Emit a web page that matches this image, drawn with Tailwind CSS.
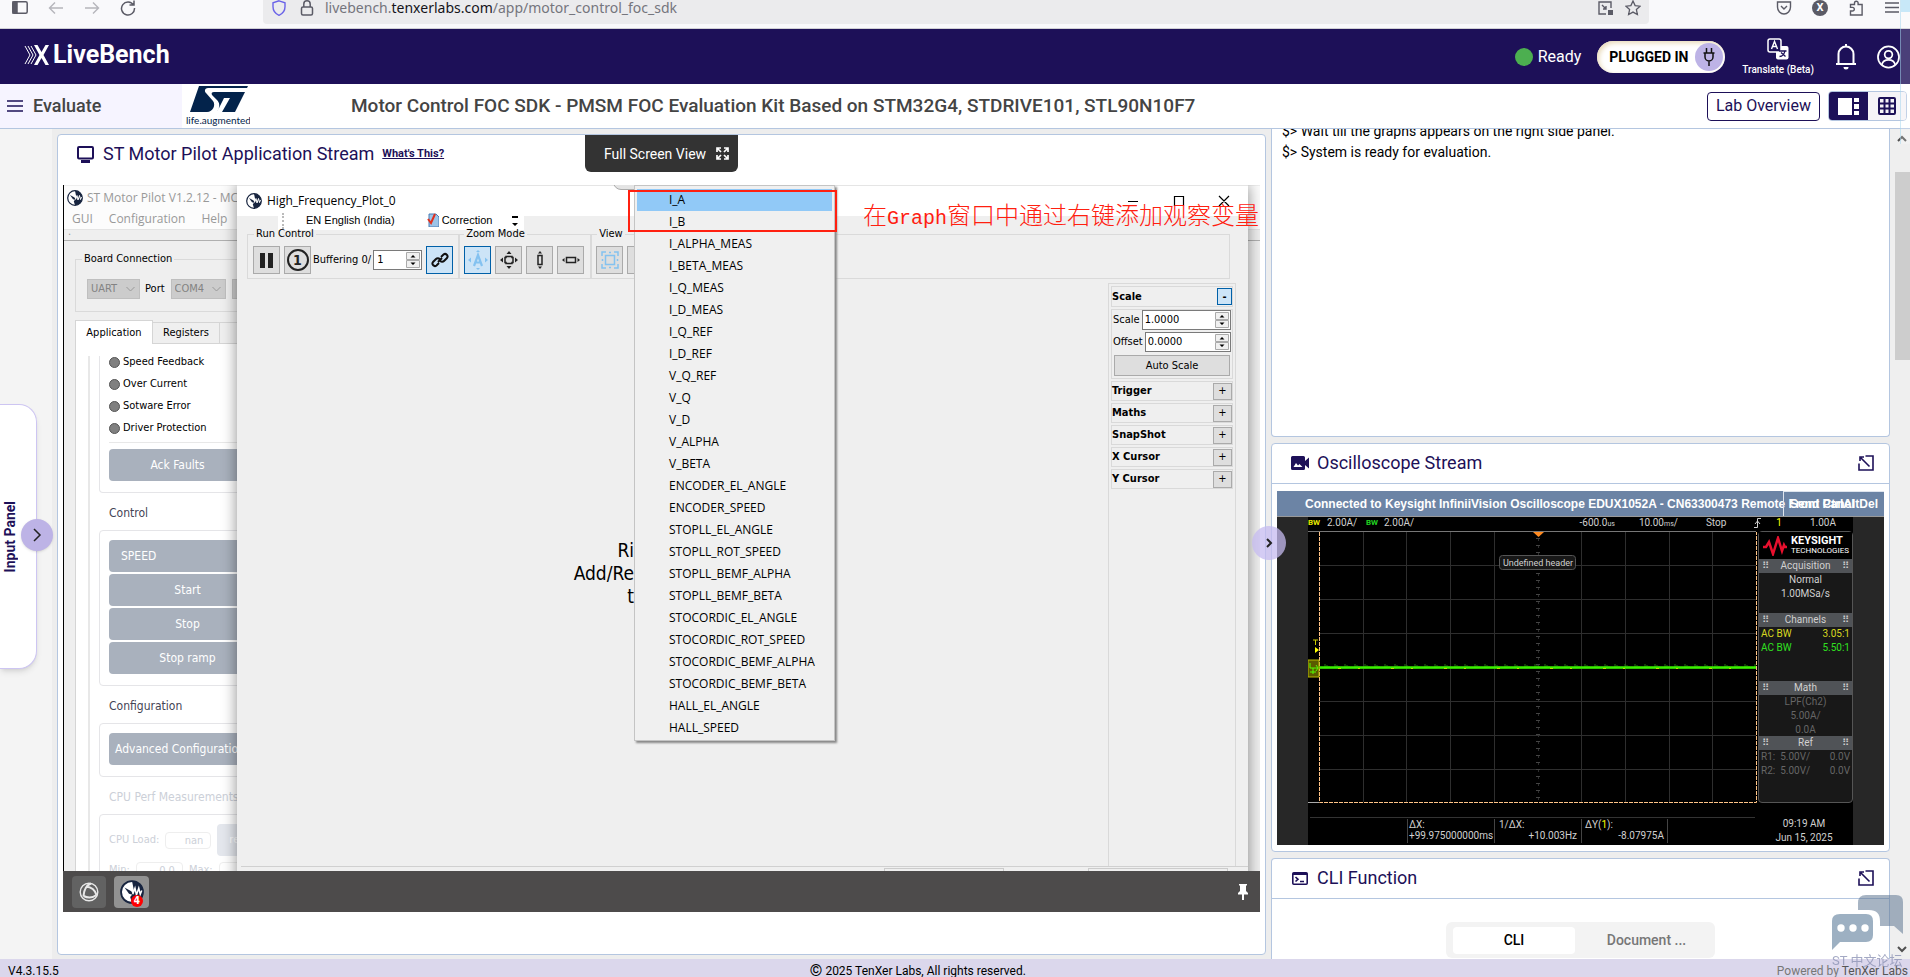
<!DOCTYPE html>
<html lang="en">
<head>
    <meta charset="UTF-8">
    <meta name="viewport" content="width=device-width, initial-scale=1.0">
    <title>LiveBench - Motor Control FOC SDK</title>
    <script src="https://cdn.jsdelivr.net/npm/@tailwindcss/browser@4"></script>
</head>
<body class="h-screen overflow-hidden flex flex-col bg-[#ededed] font-[Roboto,sans-serif] text-black">

    <!-- shared icons -->
    <svg class="hidden">
        <symbol id="pilot" viewBox="0 0 16 16">
            <circle cx="8" cy="8" r="7.3" fill="#fff" stroke="#17243f" stroke-width="1.2"/>
            <path d="M8 .7a7.3 7.3 0 0 1 0 14.6l-1.2-4L9.500 8z" fill="#17243f"/>
            <path d="M3 5l4.500 2.500 1.500 2.500-3-.8z" fill="#17243f"/>
            <path d="M8.500 9.500l1.500-4 1 4.500 1.500-4.500 1 4 1-2.500" fill="none" stroke="#fff" stroke-width="1"/>
        </symbol>
        <symbol id="expand" viewBox="0 0 16 16">
            <path d="M7.500 1H15v14H1V8.500M3 3l8.500 8.500M2 6V2h4" fill="none" stroke="#1d1058" stroke-width="1.600"/>
        </symbol>
        <symbol id="spin" viewBox="0 0 14 16">
            <path d="M.5.500h13v7H.500zM.5 8.500h13v7H.500z" fill="#f0f0f0" stroke="#aaa"/>
            <path d="M4.500 5.500h5L7 3zM4.500 10.500h5L7 13z"/>
        </symbol>
    </svg>

    <!-- browser toolbar -->
    <div class="h-[29px] shrink-0 flex items-start bg-[#f9f9fb] border-b border-[#cfcfd4] text-[#5b5b66]">
        <div class="w-[263px] flex items-center gap-5 pl-3">
            <svg class="w-4 h-4" viewBox="0 0 16 16" fill="none" stroke="currentColor" stroke-width="1.500"><rect x=".8" y="1.800" width="14.400" height="11.500" rx="1.500"/><path d="M1 2h4v11H1z" fill="currentColor"/></svg>
            <svg class="w-4 h-4 text-[#b5b5bb]" viewBox="0 0 16 16" fill="none" stroke="currentColor" stroke-width="1.400"><path d="M15 8H1.500M7 2.500L1.500 8 7 13.500"/></svg>
            <svg class="w-4 h-4 text-[#b5b5bb]" viewBox="0 0 16 16" fill="none" stroke="currentColor" stroke-width="1.400"><path d="M1 8h13.500M9 2.500L14.500 8 9 13.500"/></svg>
            <svg class="w-4 h-4" viewBox="0 0 16 16" fill="none" stroke="currentColor" stroke-width="1.500"><path d="M13.500 5A6.500 6.500 0 1 0 14.500 8M14 .5V5H9.500"/></svg>
        </div>
        <div class="flex-1 h-6 flex items-start bg-[#ebebed] rounded-b-sm pl-2 pr-2">
            <svg class="w-4 h-4" viewBox="0 0 16 16" fill="none" stroke="#6a63e8" stroke-width="1.400"><path d="M8 .8l6 2v4c0 4-2.500 7-6 8.500C4.500 13.800 2 10.800 2 6.800v-4z"/></svg>
            <svg class="w-4 h-4 ml-3" viewBox="0 0 16 16" fill="none" stroke="currentColor" stroke-width="1.500"><rect x="2.500" y="7" width="11" height="8" rx="1.500"/><path d="M4.800 7V4a3.200 3.200 0 0 1 6.400 0v3"/></svg>
            <span class="ml-[10px] text-[14px] leading-4 text-[#75757d] font-['Noto_Sans',sans-serif]">livebench.<span class="text-[#15141a]">tenxerlabs.com</span>/app/motor_control_foc_sdk</span>
            <svg class="w-4 h-4 ml-auto" viewBox="0 0 16 16" fill="none" stroke="currentColor" stroke-width="1.400"><path d="M9 14H2V2h12v6M5 5l4 4M9 6v3H6"/><path d="M11 10h5v5h-5z" fill="currentColor" stroke="none"/></svg>
            <svg class="w-4 h-4 ml-3" viewBox="0 0 16 16" fill="none" stroke="currentColor" stroke-width="1.300"><path d="M8 1l2.100 4.600 5 .6-3.700 3.400 1 5L8 12.100l-4.400 2.500 1-5L.9 6.200l5-.6z"/></svg>
        </div>
        <div class="w-[261px] flex items-center justify-end gap-5 pr-[10px]">
            <svg class="w-4 h-4" viewBox="0 0 16 16" fill="none" stroke="currentColor" stroke-width="1.400"><path d="M1.500 2h13v5c0 4-3 7-6.500 7s-6.500-3-6.500-7zM5 6l3 3 3-3"/></svg>
            <span class="w-4 h-4 rounded-full bg-[#5b5b66] text-white text-[11px] leading-4 font-bold text-center">X</span>
            <svg class="w-4 h-4" viewBox="0 0 16 16" fill="none" stroke="currentColor" stroke-width="1.400"><path d="M2.500 15V11h2a1.800 1.800 0 0 0 0-3.600h-2V4.500h4V3a1.800 1.800 0 0 1 3.600 0v1.500h4V15z"/></svg>
            <svg class="w-4 h-4" viewBox="0 0 16 16" stroke="currentColor" stroke-width="1.400"><path d="M1 3h14M1 7.500h14M1 12h14"/></svg>
        </div>
    </div>

    <!-- app header -->
    <header class="h-[55px] shrink-0 flex items-center bg-[#1d1058] text-white pl-6 pr-[10px]">
        <a href="#" class="flex items-center gap-1 pb-1 text-[25px] leading-6 font-bold">
            <svg class="w-[25px] h-5" viewBox="0 0 25 20" fill="none" stroke="#fff"><path d="M1 1l5 9-5 9M4 1l5 9-5 9M7 1l5 9-5 9" stroke-width="1"/><path d="M10 0h3.500l4 7 4-7H25l-5.500 10L25 20h-3.500l-4-7-4 7H10l5.500-10z" fill="#fff" stroke="none"/></svg>
            LiveBench
        </a>
        <span class="ml-auto w-[18px] h-[18px] rounded-full bg-[#4caf50]"></span>
        <span class="ml-[5px] text-base">Ready</span>
        <button class="ml-4 w-32 h-8 rounded-full bg-white shadow-[inset_2px_2px_5px_#e8d9b8] flex items-center justify-between pl-3 pr-[2px] text-sm font-bold text-black">
            PLUGGED IN
            <span class="w-7 h-7 rounded-full bg-[#bdb3e6] flex items-center justify-center">
                <svg class="w-4 h-5" viewBox="0 0 16 20" fill="none" stroke="#111" stroke-width="1.500"><path d="M5.500 1v5M10.500 1v5M2.500 6h11M4 6v4a4 4 0 0 0 8 0V6M8 14v5"/></svg>
            </span>
        </button>
        <button class="ml-[17px] flex flex-col items-center text-[10px] leading-3 font-medium">
            <svg class="w-[22px] h-[22px] mb-1" viewBox="0 0 22 22"><rect x="9" y="8" width="12.500" height="13.500" rx="2" fill="#fff"/><rect x="1" y="1" width="13" height="13" rx="2" fill="#1d1058" stroke="#fff" stroke-width="1.500"/><path d="M4.500 11l3-7.500 3 7.500M5.500 8.500h4" stroke="#fff" stroke-width="1.400" fill="none"/><path d="M12.500 18.500c3 0 5-3 5.500-6M12 13h7.500M14 14.500l4.500 4" stroke="#1d1058" stroke-width="1.300" fill="none"/></svg>
            Translate (Beta)
        </button>
        <svg class="ml-[21px] w-[22px] h-[26px]" viewBox="0 0 22 26" fill="none" stroke="#fff" stroke-width="2"><path d="M1 20h20M3.500 20V10a7.500 7.500 0 0 1 15 0v10M11 3V0"/><path d="M8.500 23h5a2.500 2.500 0 0 1-5 0z" fill="#fff" stroke="none"/></svg>
        <svg class="ml-5 w-[23px] h-6" viewBox="0 0 24 24" fill="none" stroke="#fff" stroke-width="1.800"><circle cx="12" cy="12" r="11"/><circle cx="12" cy="9.500" r="4"/><path d="M5 20c1-3.500 4-5 7-5s6 1.500 7 5"/></svg>
    </header>

    <!-- title bar -->
    <div class="h-[45px] shrink-0 flex items-center bg-white border-b border-[#b4c6e0] text-[#444] pr-[3px]">
        <div class="w-[182px] h-full bg-[#f6f4ff] flex items-center gap-[10px] pl-[7px] text-lg font-medium">
            <svg class="w-4 h-4" viewBox="0 0 16 16" stroke="#1d1058" stroke-width="1.600"><path d="M0 3h16M0 8h16M0 13h16"/></svg>
            Evaluate
        </div>
        <svg class="ml-1 w-[64px] h-[42px]" viewBox="0 0 64 42"><path d="M13 1h49l-1 2H22c-3 0-4 3-2 5l7 8c3 4 0 11-6 11H4zM28 7h31l-10 20H36l8-14h-6l-7 14c3-5 3-9 0-12l-5-5c-1-2 0-3 2-3z" fill="#03234b"/><text x="0" y="39" font-size="10" fill="#03234b" font-family="Lato">life.augmented</text></svg>
        <h1 class="ml-[101px] text-[19px] leading-6 font-medium">Motor Control FOC SDK - PMSM FOC Evaluation Kit Based on STM32G4, STDRIVE101, STL90N10F7</h1>
        <button class="ml-auto h-[29px] px-2 border border-[#1d1058] rounded text-base leading-6 text-[#1d1058]">Lab Overview</button>
        <div class="ml-2 h-[30px] flex border border-[#b4c6e0] rounded overflow-hidden">
            <button class="w-[39px] bg-[#1d1058] flex items-center justify-center" aria-label="Split view"><svg class="w-[22px] h-[17px]" viewBox="0 0 22 17" fill="#fff"><path d="M0 0h14v17H0zM16 0h5v4h-5zM16 6h5v5h-5zM16 13h5v4h-5z"/></svg></button>
            <button class="w-[38px] bg-[#f5f3f7] flex items-center justify-center" aria-label="Grid view"><svg class="w-[18px] h-[18px]" viewBox="0 0 18 18" fill="none" stroke="#1d1058" stroke-width="2"><rect x="1" y="1" width="16" height="16" rx="1"/><path d="M6.500 1v16M11.500 1v16M1 6.500h16M1 11.500h16"/></svg></button>
        </div>
    </div>

    <main class="flex-1 min-h-0 flex">
        <!-- collapsed input panel -->
        <aside class="w-[52px] shrink-0 bg-[#f4f4f4] pt-[275px] relative z-20">
            <div class="w-[37px] h-[265px] relative bg-white border border-l-0 border-[#cdc5f2] rounded-r-[18px] shadow-md flex items-center">
                <span class="[writing-mode:vertical-rl] rotate-180 text-sm leading-5 font-bold text-[#1d1058]">Input Panel</span>
                <button class="absolute top-[114px] left-[21px] w-8 h-8 rounded-full bg-[#bdb3e6] shadow flex items-center justify-center" aria-label="Open input panel"><svg class="w-3 h-4" viewBox="0 0 12 16" fill="none" stroke="#222" stroke-width="1.500"><path d="M3 2l6 6-6 6"/></svg></button>
            </div>
        </aside>

        <!-- application stream -->
        <section class="flex-1 min-w-0 ml-[5px] mt-[5px] mb-1 relative bg-white border border-[#b4c6e0] rounded flex flex-col px-[5px]">
            <div class="h-[50px] shrink-0 flex items-start pl-[14px] pt-2">
                <svg class="mt-[3px] w-[17px] h-[17px]" viewBox="0 0 17 17" fill="none" stroke="#1d1058" stroke-width="2"><rect x="1" y="1" width="15" height="11.500" rx="1"/><path d="M4 15.500h9" stroke-width="3"/></svg>
                <h2 class="ml-[9px] text-lg leading-[22px] text-[#1d1058]">ST Motor Pilot Application Stream</h2>
                <a href="#" class="ml-2 text-[11px] leading-[22px] font-bold underline text-[#1d1058]">What's This?</a>
            </div>
            <button class="absolute top-0 left-[527px] w-[153px] h-[37px] bg-[#333] rounded-b-md text-white text-sm flex items-center justify-center gap-[10px] pl-[10px]">
                Full Screen View
                <svg class="w-[13px] h-[13px]" viewBox="0 0 13 13" fill="none" stroke="#fff" stroke-width="1.700"><path d="M1 5V1h4M8 1h4v4M12 8v4H8M5 12H1V8M1 1l4 4M12 1L8 5M12 12L8 8M1 12l4-4"/></svg>
            </button>

            <!-- remote desktop -->
            <div class="flex-1 min-h-0 relative overflow-hidden bg-[#efefef] text-[11px] leading-[14px] font-['DejaVu_Sans_Condensed','DejaVu_Sans',sans-serif]">

                <!-- main window -->
                <div class="absolute inset-0 border-l border-black flex flex-col">
                    <div class="h-6 shrink-0 bg-[#fcfcfc] border-t border-[#eee] flex items-center gap-1 pl-[3px] text-xs text-[#999] font-['Open_Sans',sans-serif]"><svg class="w-4 h-4"><use href="#pilot"/></svg>ST Motor Pilot V1.2.12 - MC_SDK</div>
                    <div class="h-5 shrink-0 bg-[#fcfcfc] flex items-center gap-4 pl-2 text-xs text-[#999] font-['Open_Sans',sans-serif]"><span>GUI</span><span>Configuration</span><span>Help</span></div>
                    <div class="h-[12px] shrink-0 border-t border-b border-t-[#e4e4e4] border-b-[#b0b0b0] pl-1 text-[#999] leading-[4px]">.</div>
                    <div class="flex-1 min-h-0 pl-[11px] pt-[11px] flex flex-col">
                        <fieldset class="h-[60px] shrink-0 w-[1170px] border border-[#dadada] pl-[11px]">
                            <legend class="-ml-[5px] px-[2px]">Board Connection</legend>
                            <div class="flex items-center gap-[6px] pt-[13px]">
                                <select aria-label="Interface" disabled class="appearance-none w-[53px] h-5 px-[3px] bg-[#ccc] border border-[#bfbfbf] text-[#838383]"><option>UART</option></select>
                                <svg class="-ml-[20px] mr-[4px] w-[9px] h-3" viewBox="0 0 9 12" fill="none" stroke="#999"><path d="M.5 4l4 4 4-4"/></svg>
                                <label for="port">Port</label>
                                <select id="port" disabled class="appearance-none w-[55px] h-5 px-[3px] bg-[#ccc] border border-[#bfbfbf] text-[#838383]"><option>COM4</option></select>
                                <svg class="-ml-[20px] mr-[5px] w-[9px] h-3" viewBox="0 0 9 12" fill="none" stroke="#999"><path d="M.5 4l4 4 4-4"/></svg>
                                <button class="w-16 h-5 bg-[#ccc] border border-[#bfbfbf]" aria-label="Connect"></button>
                            </div>
                        </fieldset>
                        <div class="mt-2 flex items-end shrink-0">
                            <button class="w-[78px] h-6 bg-white border border-b-0 border-[#d5d5d5]">Application</button>
                            <button class="w-[67px] h-[22px] border border-l-0 border-[#d5d5d5]">Registers</button>
                            <span class="w-16 h-[22px] border-y border-[#d5d5d5]"></span>
                        </div>
                        <div class="flex-1 min-h-0 overflow-hidden w-[1150px] bg-white border-l border-[#d5d5d5] pl-3 pt-3">
                            <div class="border-l-2 border-[#e8e8e8] pl-[9px] w-[280px] h-[600px]">
                                <div class="flow-root h-[137px] border border-t-0 border-[#e5e5e8] rounded-b px-[9px]">
                                    <div id="faults" class="h-[92px] border-b border-[#e8e8e8] -mt-[5px]"></div>
                                    <button class="mt-[6px] w-full h-8 rounded bg-[#a9b1bd] text-white text-xs pr-[112px]">Ack Faults</button>
                                </div>
                                <h3 class="pl-[10px] pt-3 h-[37px] text-xs leading-4 text-[#445]">Control</h3>
                                <div id="motor" class="h-[156px] border border-[#e5e5e8] rounded p-[9px] flex flex-col gap-[2px]"></div>
                                <h3 class="pl-[10px] pt-3 h-[37px] text-xs leading-4 text-[#445]">Configuration</h3>
                                <div class="h-[54px] border border-[#e5e5e8] rounded p-[9px]"><button class="w-full h-8 rounded bg-[#a9b1bd] text-white text-xs text-left pl-[6px]">Advanced Configuration</button></div>
                                <h3 class="pl-[10px] pt-3 h-[37px] text-xs leading-4 text-[#ccd0d8]">CPU Perf Measurements</h3>
                                <div class="h-[90px] border border-[#e5e5e8] rounded p-[9px] text-[#ccd0d8]">
                                    <div class="flex items-center gap-[6px] h-8"><label for="load">CPU Load:</label><input id="load" value="nan" class="w-[46px] h-[17px] border border-[#eee] rounded-sm text-right pr-[7px]"><button class="w-16 h-8 rounded bg-[#e4e7ed] text-white text-left pl-3">reset</button></div>
                                    <div class="flex items-center gap-[6px] h-7"><label for="min">Min:</label><input id="min" value="0.0" class="w-[47px] h-[17px] border border-[#eee] rounded-sm text-right pr-[7px]"><label for="max">Max:</label><input id="max" class="w-12 h-[17px] border border-[#eee] rounded-sm"></div>
                                </div>
                            </div>
                        </div>
                    </div>
                </div>

                <!-- plot window -->
                <div class="absolute top-0 bottom-0 left-[174px] right-[12px] bg-[#efefef] shadow-[0_0_14px_rgba(0,0,0,0.45)] flex flex-col">
                    <div class="h-[31px] shrink-0 bg-white border-t border-[#e5e5e5] flex items-center pl-[9px] pr-[18px]">
                        <svg class="w-4 h-4"><use href="#pilot"/></svg>
                        <span class="ml-[5px] text-xs font-['Open_Sans',sans-serif]">High_Frequency_Plot_0</span>
                        <svg class="ml-auto w-[102px] h-3" viewBox="0 0 102 12" fill="none" stroke="#000" stroke-width="1.200"><path d="M0 6.500h10M46.500 1.500h9v9h-9zM91 1l10 10M101 1L91 11"/></svg>
                    </div>
                    <div class="ml-[41px] -mt-1 w-[246px] h-[18px] shrink-0 bg-white flex items-start pt-[1px] text-[11px] leading-[14px] font-['Liberation_Sans',sans-serif]">
                        <span class="ml-1 h-[16px] border-l-2 border-dotted border-[#bbb]"></span>
                        <span class="ml-[22px]">EN English (India)</span>
                        <svg class="ml-[32px] w-[12px] h-[14px]" viewBox="0 0 12 14"><path d="M2 1h7l3 3v10H2z" fill="#9cc4e8" stroke="#4a7db5"/><path d="M1 6l3 4 4-9" fill="none" stroke="#e0301e" stroke-width="2"/></svg>
                        <span class="ml-[3px]">Correction</span>
                        <svg class="mt-[2px] ml-auto mr-[6px] w-[6px] h-3" viewBox="0 0 6 12"><path d="M0 1h6v2H0zM0 8h6l-3 3z"/></svg>
                    </div>
                    <div class="flex shrink-0 pl-[10px] pr-[18px] -mt-[3px]">
                        <fieldset class="w-[211px] h-[52px] border border-[#dadada] px-[5px]">
                            <legend class="ml-[1px] px-[2px] relative">Run Control</legend>
                            <div class="flex items-center gap-1 pt-[5px]">
                                <button class="w-[27px] h-7 bg-[#dedede] border border-[#aaa] flex items-center justify-center" aria-label="Pause"><svg class="w-[15px] h-[15px]"><path d="M1 0h5v15H1zM9 0h5v15H9z" fill="#222"/></svg></button>
                                <button class="w-[27px] h-7 bg-[#dedede] border border-[#aaa] flex items-center justify-center" aria-label="Single"><span class="w-[22px] h-[22px] rounded-full border-2 border-[#222] text-sm leading-[18px] font-bold text-[#222]">1</span></button>
                                <label for="buf" class="-ml-[2px] whitespace-nowrap">Buffering 0/</label>
                                <span class="w-[49px] h-5 -ml-[2px] bg-white border border-[#7a7a7a] flex items-center pr-[1px]"><input id="buf" value="1" class="min-w-0 flex-1 pl-[3px]"><svg class="w-[14px] h-4 shrink-0"><use href="#spin"/></svg></span>
                                <button class="w-[27px] h-7 bg-[#cce4f7] border border-[#0060a8] flex items-center justify-center" aria-label="Link"><svg class="w-[18px] h-[18px]" viewBox="0 0 18 18" fill="none" stroke="#111" stroke-width="2"><path d="M8 12l-2.500 2.500a2.500 2.500 0 0 1-3.500-3.500l3-3a2.500 2.500 0 0 1 3.700.2M10 6l2.500-2.500A2.500 2.500 0 0 1 16 7l-3 3a2.500 2.500 0 0 1-3.700-.2M7 11l4-4"/></svg></button>
                            </div>
                        </fieldset>
                        <fieldset class="w-[132px] h-[52px] border border-[#dadada] px-1">
                            <legend class="px-[2px]">Zoom Mode</legend>
                            <div class="flex gap-1 pt-[5px]">
                                <button class="w-[27px] h-7 bg-[#cce4f7] border border-[#0060a8] flex items-center justify-center" aria-label="Auto zoom"><svg class="w-5 h-5" viewBox="0 0 20 20" fill="#84c2f0"><path d="M10 0l2 2H8zM10 20l2-2H8zM0 10l3-2.500v5zM20 10l-3-2.500v5z"/><path d="M6 16l4-11 4 11M7 12.500h6" fill="none" stroke="#84c2f0" stroke-width="2.200"/></svg></button>
                                <button class="w-[27px] h-7 bg-[#dedede] border border-[#aaa] flex items-center justify-center" aria-label="Zoom both"><svg class="w-[18px] h-[18px]" viewBox="0 0 18 18"><path d="M6 5.500h6v1h1v5h-1v1H6v-1H5v-5h1z" fill="none" stroke="#222" stroke-width="1.500"/><path d="M9 0l2.500 3h-5zM9 18l2.500-3h-5zM0 9l3-2.500v5zM18 9l-3-2.500v5z" fill="#222"/></svg></button>
                                <button class="w-[27px] h-7 bg-[#dedede] border border-[#aaa] flex items-center justify-center" aria-label="Zoom Y"><svg class="w-[18px] h-[18px]" viewBox="0 0 18 18"><path d="M7 4.500h4v9H7z" fill="none" stroke="#222" stroke-width="1.500"/><path d="M9 0l2 2.500H7zM9 18l2-2.500H7z" fill="#222"/></svg></button>
                                <button class="w-[27px] h-7 bg-[#dedede] border border-[#aaa] flex items-center justify-center" aria-label="Zoom X"><svg class="w-[18px] h-[18px]" viewBox="0 0 18 18"><path d="M4.500 6.500h9v5h-9z" fill="none" stroke="#222" stroke-width="1.500"/><path d="M0 9l2.500-2v4zM18 9l-2.500-2v4z" fill="#222"/></svg></button>
                            </div>
                        </fieldset>
                        <fieldset class="flex-1 h-[52px] border border-[#dadada] px-1">
                            <legend class="ml-[1px] px-[2px]">View</legend>
                            <div class="flex gap-1 pt-[5px]">
                                <button class="w-[27px] h-7 bg-[#dedede] border border-[#aaa] flex items-center justify-center" aria-label="Fit"><svg class="w-[18px] h-[18px]" viewBox="0 0 18 18" fill="none" stroke="#84c2f0" stroke-width="1.500"><path d="M4.500 4.500h9v9h-9zM1 5V1h4M13 1h4v4M17 13v4h-4M5 17H1v-4M8 1.500h2M8 16.500h2M1.500 8v2M16.500 8v2"/></svg></button>
                                <button class="w-[27px] h-7 bg-[#dedede] border border-[#aaa] flex items-center pl-[6px]" aria-label="Options">:</button>
                            </div>
                        </fieldset>
                    </div>
                    <div class="flex-1 min-h-0 flex pr-3">
                        <p class="w-[397px] pt-[260px] text-right text-[19px] leading-[23px]">Ri<br>Add/Re<br>t</p>
                        <div class="ml-auto mt-1 w-[128px] border border-b-0 border-[#d9d9d9] p-[2px] flex flex-col gap-[2px]">
                            <div class="h-[21px] border border-[#d9d9d9] flex items-center justify-between font-bold"><h3>Scale</h3><button class="w-[15px] h-[17px] bg-[#cce4f7] border border-[#0060a8] leading-3">-</button></div>
                            <div class="border border-[#d9d9d9] px-[1px] pb-[2px] flex flex-col gap-[2px]">
                                <div class="flex items-center gap-[2px]"><label for="scale">Scale</label><span class="flex-1 min-w-0 h-5 bg-white border border-[#7a7a7a] flex items-center pr-[1px]"><input id="scale" value="1.0000" class="min-w-0 flex-1 pl-[2px]"><svg class="w-[14px] h-4 shrink-0"><use href="#spin"/></svg></span></div>
                                <div class="flex items-center gap-[2px]"><label for="offset">Offset</label><span class="flex-1 min-w-0 h-5 bg-white border border-[#7a7a7a] flex items-center pr-[1px]"><input id="offset" value="0.0000" class="min-w-0 flex-1 pl-[2px]"><svg class="w-[14px] h-4 shrink-0"><use href="#spin"/></svg></span></div>
                                <button class="mt-[1px] mx-[1px] h-[21px] bg-[#dedede] border border-[#aaa]">Auto Scale</button>
                            </div>
                            <div id="sections" class="flex flex-col gap-[2px]"></div>
                        </div>
                    </div>
                    <div class="h-[46px] shrink-0 ml-1 border-t border-[#d0d0d0] flex justify-end gap-[84px] pr-5 pt-[1px]"><span class="w-[120px] border border-[#ccc]"></span><span class="w-[140px] border border-[#ccc]"></span></div>
                </div>

                <!-- connection bar handle -->
                <span class="absolute -top-1 left-[550px] w-[101px] h-[9px] rounded-b-lg bg-[#e4e4e4] border border-[#aaa]"></span>

                <!-- context menu -->
                <ul id="menu" class="absolute top-0 left-[571px] w-[201px] border border-[#c4c4c4] bg-[#f0f0f0] px-[2px] pt-[3px] pb-[1px] shadow-[2px_2px_2px_#888] text-xs leading-[22px] font-['Open_Sans',sans-serif]"></ul>
                <div class="absolute top-[5px] left-[565px] w-[209px] h-[42px] border-2 border-[#ff2010]"></div>
                <p class="absolute top-[13px] right-[1px] whitespace-nowrap text-[24px] leading-8 font-light text-[#ff2010] font-['Noto_Sans_CJK_SC',sans-serif]">在<span class="text-xl font-normal font-['Liberation_Mono',monospace]">Graph</span>窗口中通过右键添加观察变量</p>

                <!-- taskbar -->
                <div class="absolute bottom-0 inset-x-0 h-[41px] bg-[#4d4b4b] flex items-center pl-[9px] pr-2">
                    <button class="w-[34px] h-8 bg-[#626262] rounded-sm flex items-center justify-center" aria-label="Launcher"><svg class="w-5 h-5" viewBox="0 0 20 20" fill="none" stroke="#e8e8e8"><circle cx="10" cy="10" r="8.800" stroke-width="1.400"/><path d="M12 1.500C8 3 5 8 4.500 14M4.500 14c4 2 9 2 13-1M17.500 13C16 8 12 5 7 4.500" stroke-width="2"/></svg></button>
                    <button class="relative ml-2 w-[35px] h-8 bg-[#929292] rounded-sm flex items-center justify-center" aria-label="ST Motor Pilot"><svg class="w-6 h-6"><use href="#pilot"/></svg><span class="absolute right-[6px] bottom-[1px] w-3 h-3 rounded-full bg-[#f00] text-white text-[10px] leading-3 font-bold">4</span></button>
                    <svg class="ml-auto w-[18px] h-[18px]" viewBox="0 0 18 18" fill="#fff"><path d="M5 1h8v1.500h-1V8l2 2v1.500h-4V17H8v-5.500H4V10l2-2V2.500H5z"/></svg>
                </div>
            </div>
            <div class="h-[42px] shrink-0"></div>
            <button class="absolute z-20 top-[391px] -right-[21px] w-[34px] h-[34px] rounded-full bg-[#c5bbf0]/75 flex items-center justify-center" aria-label="Collapse right column"><svg class="w-[10px] h-3" viewBox="0 0 10 12" fill="none" stroke="#222" stroke-width="2"><path d="M3 2l4 4-4 4"/></svg></button>
        </section>

        <!-- right column -->
        <div class="w-[619px] shrink-0 ml-[5px] flex flex-col gap-[6px] overflow-hidden">
            <section class="h-[308px] shrink-0 bg-white border border-t-0 border-[#b4c6e0] rounded-b pl-[10px] text-sm leading-[21px]">
                <p class="-mt-2">$&gt; Wait till the graphs appears on the right side panel.</p>
                <p>$&gt; System is ready for evaluation.</p>
            </section>

            <section class="h-[409px] shrink-0 bg-white border border-[#b4c6e0] rounded flex flex-col">
                <div class="h-10 shrink-0 border-b border-[#b4c6e0] flex items-center pl-[19px] pr-[15px] pb-[1px]">
                    <svg class="w-[18px] h-[14px]" viewBox="0 0 18 14" fill="#1d1058"><path d="M1.500 0h11A1.500 1.500 0 0 1 14 1.500V5l4-3.500v11L14 9v3.500a1.500 1.500 0 0 1-1.500 1.500h-11A1.500 1.500 0 0 1 0 12.500v-11A1.500 1.500 0 0 1 1.500 0z"/><path d="M2.500 11l2.500-4 2 2.500 1.500-1.500 3 3z" fill="#fff"/></svg>
                    <h2 class="ml-2 text-lg leading-6 text-[#1d1058]">Oscilloscope Stream</h2>
                    <button class="ml-auto" aria-label="Expand oscilloscope"><svg class="w-4 h-4"><use href="#expand"/></svg></button>
                </div>
                <div class="flex-1 m-[7px] mr-[5px] ml-[5px] flex flex-col text-[10px] leading-[14px] text-[#d0d0d0]">
                    <div class="relative h-[26px] shrink-0 bg-[#6c84a5] border-b border-[#999] flex items-center pl-7 text-xs font-bold text-white font-['Liberation_Sans',sans-serif] whitespace-nowrap">
                        Connected to Keysight InfiniiVision Oscilloscope EDUX1052A - CN63300473 Remote Front Panel
                        <button class="absolute right-0 top-0 w-[101px] h-[25px] border border-b-0 border-r-0 border-[#dfe5ee] text-center">Send CtrlAltDel</button>
                    </div>
                    <div class="flex-1 min-h-0 bg-[#272727] px-[31px]">
                        <div class="h-full bg-black flex flex-col">
                            <div class="h-[14px] shrink-0 flex leading-3">
                                <span class="w-[19px] text-[8px] font-bold text-[#e6e600]">BW</span><span class="w-[39px]">2.00A/</span>
                                <span class="w-[18px] text-[8px] font-bold text-[#20d020]">BW</span><span>2.00A/</span>
                                <span class="ml-auto mr-6">-600.0<span class="text-[7px]">us</span></span><span class="mr-7">10.00<span class="text-[7px]">ms</span>/</span><span class="mr-7">Stop</span><svg class="mr-[15px] mt-[1px] w-[7px] h-[10px]" viewBox="0 0 7 10" fill="none" stroke="#d0d0d0"><path d="M0 9.500h3.500v-9H7M1 6l2.500-3L6 6"/></svg><span class="mr-7 text-[#ff0]">1</span><span class="mr-[17px]">1.00A</span>
                            </div>
                            <div class="h-[272px] shrink-0 flex">
                                <svg id="plot" class="flex-1 min-w-0 h-full" viewBox="0 0 449 272" preserveAspectRatio="none"></svg>
                                <div class="w-[95px] shrink-0 ml-[1px] bg-[#181818] border border-[#555] rounded-sm flex flex-col text-center">
                                    <div class="h-[27px] bg-black flex items-center gap-1 pl-1 text-white text-left">
                                        <svg class="w-6 h-5" viewBox="0 0 24 20" fill="none" stroke="#e8102e" stroke-width="2.500"><path d="M0 11h3l3-5 4 12 5-16 4 13 2-6 1 2h2"/></svg>
                                        <span class="text-[11px] leading-[9px] font-bold">KEYSIGHT<br><span class="text-[8px] leading-2 font-normal">TECHNOLOGIES</span></span>
                                    </div>
                                    <div class="h-[54px]"><h4 class="bg-[#505357] flex justify-between px-[3px]"><span>⠿</span>Acquisition<span>⠿</span></h4>Normal<br>1.00MSa/s</div>
                                    <div class="h-[68px]"><h4 class="bg-[#505357] flex justify-between px-[3px]"><span>⠿</span>Channels<span>⠿</span></h4><p class="flex justify-between px-[2px] text-[#d8d820]"><span>AC BW</span><span>3.05:1</span></p><p class="flex justify-between px-[2px] text-[#30e020]"><span>AC BW</span><span>5.50:1</span></p></div>
                                    <div class="h-[55px] text-[#666]"><h4 class="bg-[#505357] flex justify-between px-[3px] text-[#d0d0d0]"><span>⠿</span>Math<span>⠿</span></h4>LPF(Ch2)<br>5.00A/<br>0.0A</div>
                                    <div class="text-[#666]"><h4 class="bg-[#505357] flex justify-between px-[3px] text-[#d0d0d0]"><span>⠿</span>Ref<span>⠿</span></h4><p class="flex justify-between px-[2px]"><span>R1:&nbsp; 5.00V/</span><span>0.0V</span></p><p class="flex justify-between px-[2px]"><span>R2:&nbsp; 5.00V/</span><span>0.0V</span></p></div>
                                </div>
                            </div>
                            <div class="flex-1 flex pt-[14px]">
                                <div class="flex-1 ml-[2px] mb-[2px] border-t border-[#333] flex leading-[11px] pt-[1px]">
                                    <span class="w-[97px]"></span>
                                    <p class="w-[87px] border-l border-[#444] px-[1px]">ΔX:<br><span class="block text-right">+99.975000000ms</span></p>
                                    <p class="w-[87px] border-l border-[#444] px-[4px]">1/ΔX:<br><span class="block text-right">+10.003Hz</span></p>
                                    <p class="w-[87px] border-x border-[#444] px-[3px]">ΔY(<span class="text-[#ff0]">1</span>):<br><span class="block text-right">-8.07975A</span></p>
                                </div>
                                <p class="w-[98px] text-center">09:19 AM<br>Jun 15, 2025</p>
                            </div>
                        </div>
                    </div>
                </div>
            </section>

            <section class="flex-1 min-h-0 bg-white border border-b-0 border-[#b4c6e0] rounded-t">
                <div class="h-10 border-b border-[#b4c6e0] flex items-center pl-5 pr-[15px] pb-[1px]">
                    <svg class="w-4 h-[13px]" viewBox="0 0 16 13" fill="none" stroke="#1d1058" stroke-width="1.600"><rect x=".8" y=".8" width="14.400" height="11.400" rx="1"/><path d="M1 2h14" stroke-width="2"/><path d="M3.500 5l2.500 2.300L3.500 9.500M8 9.500h4"/></svg>
                    <h2 class="ml-[9px] text-lg leading-6 text-[#1d1058]">CLI Function</h2>
                    <button class="ml-auto" aria-label="Expand CLI"><svg class="w-4 h-4"><use href="#expand"/></svg></button>
                </div>
                <div class="mt-[23px] mx-auto w-[269px] h-9 bg-[#f3f3f3] rounded-md flex items-center p-[7px] text-sm font-medium">
                    <button class="w-[122px] h-[27px] bg-white rounded">CLI</button>
                    <button class="flex-1 pl-[10px] text-[#777]">Document ...</button>
                </div>
            </section>
        </div>

        <!-- page scrollbar -->
        <div class="ml-auto w-5 shrink-0 flex flex-col items-end bg-[#efefef]">
            <svg class="mt-1 w-4 h-3" viewBox="0 0 16 12" fill="none" stroke="#505050" stroke-width="2"><path d="M4 8l4-4 4 4"/></svg>
            <div class="mt-[27px] w-[15px] h-[188px] bg-[#cdcdcd]"></div>
            <svg class="mt-auto mb-1 w-4 h-3" viewBox="0 0 16 12" fill="none" stroke="#505050" stroke-width="2"><path d="M4 4l4 4 4-4"/></svg>
        </div>
    </main>

    <footer class="h-[18px] shrink-0 bg-[#dbd7ec] flex justify-between pt-1 pl-2 pr-[2px] text-xs leading-4 whitespace-nowrap">
        <span>V4.3.15.5</span>
        <span><b class="text-base leading-3 align-[-1px]">©</b> 2025 TenXer Labs, All rights reserved.</span>
        <span class="text-[#777]">Powered by <a href="#" class="text-[#555]">TenXer Labs</a></span>
    </footer>

    <!-- forum watermark -->
    <div class="fixed z-30 right-[6px] bottom-[6px] w-[72px] text-[13px] leading-5 text-[#8d93b5]/80 whitespace-nowrap font-[Roboto,'Noto_Sans_CJK_SC',sans-serif]">
        <svg class="w-[72px] h-[56px]" viewBox="0 0 72 56"><path d="M34 0h30q7 0 7 7v32L62 31H48V26q0-11-11-11H26V8q0-8 8-8z" fill="#5f7791" fill-opacity=".55"/><path d="M8 19h26q7 0 7 7v14q0 7-7 7H8L0 55V26q0-7 8-7z" fill="#9db0c2"/><g fill="#fff"><circle cx="9" cy="33" r="3.700"/><circle cx="21" cy="33" r="3.700"/><circle cx="33" cy="33" r="3.700"/></g></svg>
        ST 中文论坛
    </div>
    <!-- edge of a docked side window -->
    <div class="fixed z-30 top-0 right-0 w-[10px] h-[144px] border-l border-[#9fd4ee]/50 bg-white/20"><div class="h-3 bg-[#c8e8f8]"></div></div>

    <script>
        const variables = [
            'I_A', 'I_B', 'I_ALPHA_MEAS', 'I_BETA_MEAS', 'I_Q_MEAS', 'I_D_MEAS', 'I_Q_REF', 'I_D_REF',
            'V_Q_REF', 'V_Q', 'V_D', 'V_ALPHA', 'V_BETA', 'ENCODER_EL_ANGLE', 'ENCODER_SPEED',
            'STOPLL_EL_ANGLE', 'STOPLL_ROT_SPEED', 'STOPLL_BEMF_ALPHA', 'STOPLL_BEMF_BETA',
            'STOCORDIC_EL_ANGLE', 'STOCORDIC_ROT_SPEED', 'STOCORDIC_BEMF_ALPHA', 'STOCORDIC_BEMF_BETA',
            'HALL_EL_ANGLE', 'HALL_SPEED'
        ];
        document.getElementById('menu').innerHTML = variables.map((name, i) =>
            `<li class="${i === 0 ? 'h-[22px] pl-8 bg-[#91c9f7]' : 'h-[22px] pl-8'}">${name}</li>`).join('');

        document.getElementById('faults').innerHTML = ['Speed Feedback', 'Over Current', 'Sotware Error', 'Driver Protection'].map(name =>
            `<div class="h-[22px] flex items-center gap-[3px]"><span class="w-[11px] h-[11px] rounded-full bg-[#808080] border border-[#555]"></span>${name}</div>`).join('');

        document.getElementById('motor').innerHTML = ['SPEED', 'Start', 'Stop', 'Stop ramp'].map((name, i) =>
            `<button class="${i === 0 ? 'h-8 rounded bg-[#a9b1bd] text-white text-xs text-left pl-3' : 'h-8 rounded bg-[#a9b1bd] text-white text-xs pr-[92px]'}">${name}</button>`).join('');

        document.getElementById('sections').innerHTML = ['Trigger', 'Maths', 'SnapShot', 'X Cursor', 'Y Cursor'].map(name =>
            `<div class="h-5 border border-[#d9d9d9] flex items-center justify-between font-bold"><h3>${name}</h3><button class="w-[19px] h-[17px] bg-[#dedede] border border-[#aaa] leading-3 font-normal">+</button></div>`).join('');

        // scope graticule, 10 x 8 divisions
        const left = 11, right = 448, mid = 136;
        let plot = '<path d="M0 .5H448" stroke="#777"/>';
        for (let i = 1; i < 10; i++) {
            const x = Math.round(left + i * 43.7) + 0.5;
            plot += `<path d="M${x} 1V271" stroke="#2e2e2e"${i === 5 ? ' stroke-dasharray="2 5"' : ''}/>`;
        }
        for (let i = 1; i < 8; i++) {
            plot += `<path d="M${left} ${i * 34 + 0.5}H${right}" stroke="#2e2e2e"/>`;
        }
        for (let y = 7; y < 271; y += 7) {
            plot += `<path d="M228 ${y}.5h4" stroke="#444"/>`;
        }
        plot += `<path d="M11.5 1V271.5H448.5V1" fill="none" stroke="#ffc487" stroke-dasharray="4 1"/>`;
        plot += `<path d="M0 271.5h11" stroke="#aaa"/>`;
        // noisy trace at ground level
        let noise = '';
        for (let x = left; x < right; x += 2) {
            noise += `M${x} ${mid - (x * 7 % 5) + 1}V${mid + 2}`;
        }
        plot += `<path d="${noise}" stroke="#1d7a0a"/><path d="M11 ${mid}.5H448" stroke="#3bf000" stroke-width="2.500"/>`;
        plot += `<path d="M30 137.5h418" stroke="#b8d800" stroke-dasharray="3 17 2 31"/>`;
        plot += `<path d="M0 129h11v17H0z" fill="#5a5a00" stroke="#b8b800"/><path d="M2 132v5h8M8 134l2 3-2 3M5 137v6M2 141h6" stroke="#5f0" fill="none"/>`;
        plot += `<path d="M7 116l4 3-4 3z" fill="#ff0"/><path d="M5 109h5M7.500 109v5" stroke="#cc0"/>`;
        plot += `<path d="M225 1h11l-5.500 5z" fill="#ff8a20"/>`;
        plot += `<rect x="191.5" y="24.5" width="76" height="14" rx="3" fill="#181818" stroke="#555"/><text x="230" y="35" text-anchor="middle" font-size="9" fill="#d0d0d0">Undefined header</text>`;
        document.getElementById('plot').innerHTML = plot;
    </script>
</body>
</html>
